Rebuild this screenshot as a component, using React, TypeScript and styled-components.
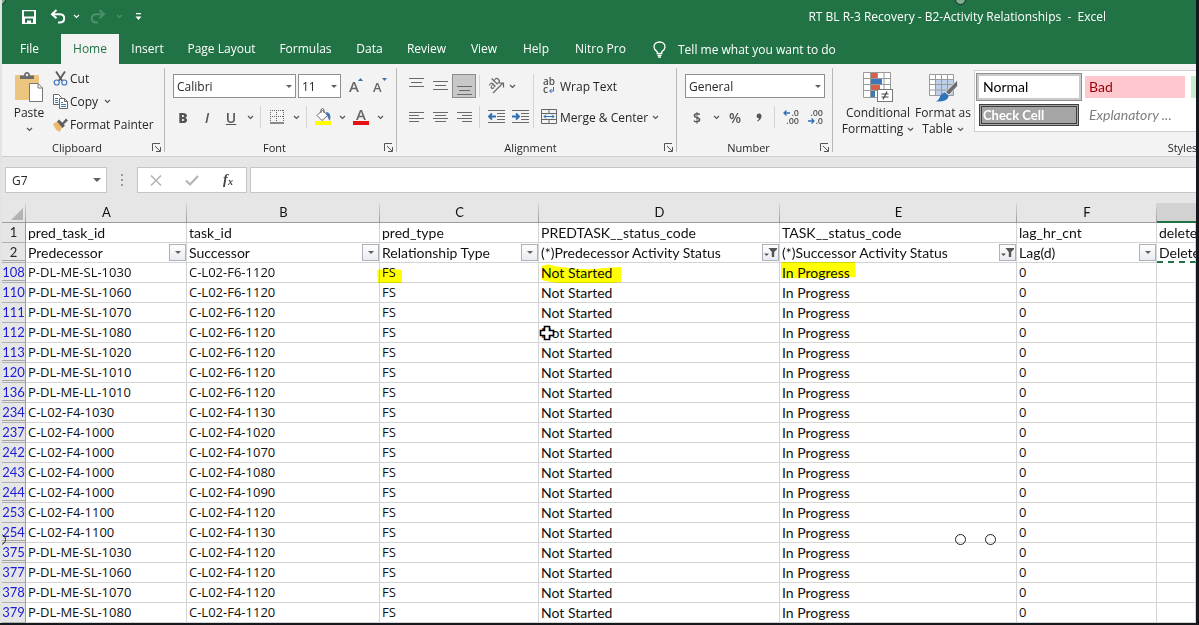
import React from 'react';
import styled, { createGlobalStyle, css } from 'styled-components';

const GREEN = '#217346';
const UI_FONT = '"Open Sans", "Noto Sans", sans-serif';
const SHEET_FONT = 'Lato, "Open Sans", sans-serif';

const GlobalStyle = createGlobalStyle`
  * { box-sizing: border-box; }
  body { margin: 0; background: #15181c; font-family: ${UI_FONT}; font-size: 12px; color: #262626; overflow: hidden; }
  button, input, select { font: inherit; color: inherit; }
  button { background: none; border: 0; padding: 0; white-space: nowrap; }
  svg { flex: none; overflow: visible; }
`;

const Window = styled.main`
  position: relative;
  overflow: hidden;
  margin: 0 3px 2px 0;
  border-left: 2px solid #dfe6e1;
  background: #e6e6e6;
`;

const TitleBar = styled.header`
  display: flex;
  align-items: center;
  justify-content: space-between;
  height: 33px;
  padding: 0 90px 0 16px;
  background: ${GREEN};
  color: #fff;
`;

const QuickAccess = styled.div`
  display: flex;
  align-items: center;
`;

const QuickButton = styled.button<{ $width: number; $faded?: boolean }>`
  display: flex;
  align-items: center;
  justify-content: center;
  width: ${(p) => p.$width}px;
  height: 24px;
  color: ${(p) => (p.$faded ? '#4c9169' : '#fff')};
`;

const Title = styled.h1`
  margin: 0;
  font-size: 12px;
  font-weight: 400;
  white-space: pre;
`;

const Tabs = styled.nav`
  display: flex;
  height: 31px;
  padding-top: 1px;
  background: ${GREEN};
  color: #fff;
`;

const Tab = styled.button<{ $width: number; $active?: boolean }>`
  flex: none;
  width: ${(p) => p.$width}px;
  padding-bottom: 1px;
  text-align: center;
  &:first-child { padding-right: 4px; }
  ${(p) => p.$active && css`background: #f3f3f3; color: ${GREEN};`}
`;

const TellMe = styled.button`
  display: flex;
  align-items: center;
  gap: 12px;
  margin-left: 14px;
`;

const Ribbon = styled.section`
  display: flex;
  height: 93px;
  padding-top: 3px;
  overflow: hidden;
  background: #f3f3f3;
  border-bottom: 1px solid #cfcfcf;
`;

const Group = styled.div<{ $width: number; $pad: number }>`
  flex: none;
  display: flex;
  flex-direction: column;
  justify-content: space-between;
  width: ${(p) => p.$width}px;
  height: 88px;
  padding-left: ${(p) => p.$pad}px;
  background: linear-gradient(#b9b9b9, #b9b9b9) right 1px / 1px 84px no-repeat;
`;

const GroupBody = styled.div`
  display: flex;
`;

const GroupFooter = styled.div<{ $pad: number }>`
  display: grid;
  grid-template-columns: 1fr auto;
  align-items: center;
  height: 16px;
  margin-left: -${(p) => p.$pad}px;
  padding-right: 4px;
  text-align: center;
  font-size: 11px;
`;

const Launcher = styled.button`
  display: flex;
  width: 9px;
  height: 9px;
`;

const ToolRows = styled.div`
  display: flex;
  flex-direction: column;
  gap: 7px;
  padding-top: 7px;
`;

const ToolRow = styled.div<{ $indent?: number }>`
  display: flex;
  align-items: center;
  height: 24px;
  padding-left: ${(p) => p.$indent ?? 0}px;
`;

const IconButton = styled.button<{ $active?: boolean }>`
  flex: none;
  display: flex;
  align-items: center;
  justify-content: center;
  width: 24px;
  height: 24px;
  border: 1px solid transparent;
  font-size: 14px;
  font-weight: 600;
  color: #555;
  ${(p) => p.$active && css`background: #c8c8c8; border-color: #8c8c8c;`}
`;

const CaretButton = styled.button<{ $tight?: boolean }>`
  flex: none;
  display: flex;
  align-items: center;
  justify-content: center;
  width: ${(p) => (p.$tight ? 8 : 14)}px;
  height: 24px;
`;

const Separator = styled.span`
  flex: none;
  width: 1px;
  height: 22px;
  margin: 0 4px 0 3px;
  background: #d4d4d4;
`;

const SelectWrap = styled.span<{ $width: number; $gap?: number }>`
  flex: none;
  display: grid;
  align-items: center;
  width: ${(p) => p.$width}px;
  height: 24px;
  margin-right: ${(p) => p.$gap ?? 0}px;
  & > * { grid-area: 1 / 1; }
  & > svg { justify-self: end; margin-right: 4px; pointer-events: none; }
`;

const Select = styled.select`
  appearance: none;
  width: 100%;
  height: 24px;
  padding: 0 0 0 3px;
  border: 1px solid #8f8f8f;
  border-radius: 0;
  background: #fff;
`;

const BigButton = styled.button<{ $width: number }>`
  flex: none;
  display: flex;
  flex-direction: column;
  align-items: center;
  width: ${(p) => p.$width}px;
  padding-top: 5px;
  line-height: 16px;
  & > svg:first-child { margin-bottom: 3px; }
`;

const BigLine = styled.span`
  display: flex;
  align-items: center;
  gap: 4px;
  min-height: 16px;
`;

const ClipboardList = styled.div`
  display: flex;
  flex-direction: column;
  margin-left: 8px;
`;

const TextButton = styled.button`
  display: flex;
  align-items: center;
  gap: 2px;
  height: 23px;
`;

const AlignIcons = styled.div`
  width: 130px;
  margin-right: 6px;
  background: linear-gradient(#d4d4d4, #d4d4d4) right 7px / 1px 54px no-repeat;
`;

const Gallery = styled.div`
  display: grid;
  grid-template-columns: repeat(5, 100px);
  grid-auto-rows: 22px;
  gap: 6px;
  height: 62px;
  margin: 3px 0 0 2px;
  padding: 5px 4px;
  border: 1px solid #d0d0d0;
  background: #fff;
`;

const StyleCell = styled.button<{ $kind: string }>`
  padding-left: 4px;
  text-align: left;
  font-family: ${SHEET_FONT};
  font-size: 14px;
  line-height: 20px;
  ${(p) => p.$kind === 'normal' && css`color: #000; box-shadow: 0 0 0 2px #cacaca, 0 0 0 3px #8e8e8e;`}
  ${(p) => p.$kind === 'bad' && css`color: #9c0006; background: #ffc7ce;`}
  ${(p) => p.$kind === 'good' && css`color: #006100; background: #c6efce;`}
  ${(p) => p.$kind === 'check' && css`
    padding-left: 1px; color: #fff; font-weight: 700; font-size: 13px; line-height: 16px;
    background: #a5a5a5; border: 3px double #3f3f3f;
  `}
  ${(p) => p.$kind === 'explain' && css`color: #7f7f7f; font-style: italic;`}
`;

const FormulaBar = styled.section`
  display: flex;
  height: 46px;
  padding: 10px 0 10px 3px;
`;

const NameBox = styled.label`
  flex: none;
  display: flex;
  align-items: center;
  width: 102px;
  padding-right: 5px;
  border: 1px solid #c6c6c6;
  background: #fff;
`;

const PlainInput = styled.input`
  flex: 1;
  min-width: 0;
  padding: 0 6px;
  border: 0;
  outline: 0;
  background: transparent;
`;

const Grip = styled.span`
  display: flex;
  align-items: center;
  justify-content: center;
  width: 30px;
`;

const EntryTools = styled.div`
  flex: none;
  display: flex;
  align-items: center;
  width: 110px;
  border: 1px solid #c6c6c6;
  background: #fff;
`;

const EntryButton = styled.button`
  flex: 1;
  display: flex;
  align-items: center;
  justify-content: center;
  height: 24px;
`;

const FormulaInput = styled(PlainInput)`
  margin-left: 3px;
  border: 1px solid #c6c6c6;
  border-right: 0;
  background: #fff;
`;

const Sheet = styled.table`
  width: 100%;
  table-layout: fixed;
  border-collapse: separate;
  border-spacing: 0;
  font-family: ${SHEET_FONT};
  font-size: 14px;
  line-height: 19px;
  color: #111;
`;

const Col = styled.col<{ $width?: number }>`
  width: ${(p) => (p.$width ? `${p.$width}px` : 'auto')};
`;

const ColumnHead = styled.th<{ $selected?: boolean }>`
  height: 20px;
  padding: 0;
  font-size: 13px;
  font-weight: 400;
  border-bottom: 1px solid #9c9c9c;
  background: linear-gradient(#d8d8d8, #9c9c9c) right / 1px 100% no-repeat #e6e6e6;
  ${(p) => p.$selected && css`background: #d2d2d2; border-bottom: 2px solid ${GREEN};`}
`;

const SelectAll = styled.svg`
  display: block;
  margin: 2px 3px 0 auto;
`;

const RowHead = styled.th<{ $filtered: boolean; $gapBelow: boolean }>`
  height: 20px;
  padding: 0;
  font-size: 13px;
  font-weight: 400;
  color: ${(p) => (p.$filtered ? '#1c1cd8' : '#262626')};
  background: ${(p) => (p.$gapBelow ? 'linear-gradient(#a8a8a8, #a8a8a8) 0 17px / 100% 1px no-repeat #e6e6e6' : '#e6e6e6')};
  border-right: 1px solid #9c9c9c;
  border-bottom: 1px solid #b0b0b0;
`;

const Cell = styled.td<{ $marching?: boolean; $code?: boolean }>`
  position: relative;
  height: 20px;
  padding: 0 0 0 2px;
  white-space: nowrap;
  background: #fff;
  border-right: 1px solid #d4d4d4;
  border-bottom: 1px solid #d4d4d4;
  ${(p) => p.$code && css`font-family: ${UI_FONT}; font-size: 13px;`}
  ${(p) => p.$marching && css`border-bottom: 2px dashed ${GREEN};`}
`;

const HeaderCell = styled.div`
  display: flex;
  align-items: center;
  justify-content: space-between;
  height: 18px;
`;

const FilterButton = styled.button`
  flex: none;
  display: flex;
  align-items: center;
  justify-content: center;
  width: 17px;
  height: 17px;
  border: 1px solid #adb2ba;
  background: linear-gradient(#fff, #e8ebf0);
`;

const Marker = styled.svg<{ $x: number; $y: number }>`
  position: absolute;
  left: ${(p) => p.$x}px;
  top: ${(p) => p.$y}px;
  mix-blend-mode: multiply;
  pointer-events: none;
`;

const Pointer = styled.svg`
  position: absolute;
  left: 0;
  top: 2px;
  pointer-events: none;
`;

const Handle = styled.span<{ $x: number; $y: number; $light?: boolean }>`
  position: absolute;
  left: ${(p) => p.$x}px;
  top: ${(p) => p.$y}px;
  width: 11px;
  height: 11px;
  border: 1px solid #222;
  border-radius: 50%;
  ${(p) => p.$light && css`background: #7fae93;`}
`;

/* ---------- icons ---------- */

const Chevron = ({ color = '#555' }: { color?: string }) => (
  <svg width="7" height="5" viewBox="0 0 7 5" fill="none" stroke={color} strokeWidth="1.2">
    <path d="M1 1l2.5 2.4L6 1" />
  </svg>
);

const Triangle = ({ size = 6 }: { size?: number }) => (
  <svg width={size} height={size / 2} viewBox="0 0 8 4">
    <path d="M0 0h8L4 4z" fill="#606060" />
  </svg>
);

const SaveIcon = () => (
  <svg width="14" height="14" viewBox="0 0 14 14">
    <path fill="#fff" fillRule="evenodd" d="M0 0h14v14H0zM2 1.300v5.200h10V1.300zM3 8.500v4.200h2V10.500h4v2.200h2V8.500z" />
    <path fill="#fff" d="M6 11.200h1.600v2H6z" />
  </svg>
);

const UndoIcon = ({ flip }: { flip?: boolean }) => (
  <svg width="16" height="15" viewBox="0 0 16 15" fill="none" stroke="currentColor" strokeWidth="2">
    <g transform={flip ? 'translate(16 0) scale(-1 1)' : undefined}>
      <path d="M6.500 1L2 5.200l4.500 4" />
      <path d="M2 5.200h7.500c3 0 4.700 1.600 4.700 4s-1.700 4.300-4.700 4.300H8" />
    </g>
  </svg>
);

const CustomizeIcon = () => (
  <svg width="7" height="8" viewBox="0 0 7 8" fill="#fff">
    <path d="M1 0h5v1.200H1zM0.500 3.500h6l-3 3.500z" />
  </svg>
);

const BulbIcon = () => (
  <svg width="13" height="17" viewBox="0 0 13 17" fill="none" stroke="#fff" strokeWidth="1.300">
    <path d="M4.200 12.500V10.800C2.600 9.600 1 8.200 1 5.900 1 3 3.400 1 6.500 1S12 3 12 5.900c0 2.300-1.600 3.700-3.200 4.900v1.700z" />
    <path d="M4.500 14.300h4M5 16h3" />
  </svg>
);

const PasteIcon = () => (
  <svg width="30" height="30" viewBox="0 0 30 30">
    <rect x="1" y="3" width="24" height="25" rx="1" fill="#ecc57f" />
    <path d="M6 7V3.500h4C10 1 11.500 0 13 0s3 1 3 3.500h4V7z" fill="#6d6d6d" />
    <circle cx="13" cy="3" r="1.200" fill="#f3f3f3" />
    <path d="M15.500 11.500H24l4.500 4.500v13.500h-13z" fill="#fff" stroke="#777" />
    <path d="M24 11.500V16h4.500" fill="none" stroke="#777" />
  </svg>
);

const CutIcon = () => (
  <svg width="15" height="15" viewBox="0 0 15 15" fill="none">
    <path d="M3 0.500l6.200 9.300M12 0.500L5.800 9.800" stroke="#5a5a5a" strokeWidth="1.800" />
    <circle cx="3.700" cy="11.500" r="2.500" stroke="#3f78b8" strokeWidth="1.200" />
    <circle cx="11.300" cy="11.500" r="2.500" stroke="#3f78b8" strokeWidth="1.200" />
  </svg>
);

const CopyIcon = () => (
  <svg width="15" height="15" viewBox="0 0 15 15" stroke="#666" fill="#fff">
    <path d="M0.500 0.500h5l3 3v7h-8z" />
    <path d="M2 4.500h3M2 6.500h3M2 8.500h3" stroke="#3f78b8" />
    <path d="M6.500 4.500h5l3 3v7h-8z" />
    <path d="M11.500 4.500v3h3" fill="none" />
    <path d="M8 8.500h2M8 10.500h5M8 12.500h5" stroke="#3f78b8" />
  </svg>
);

const PainterIcon = () => (
  <svg width="15" height="14" viewBox="0 0 15 14">
    <path d="M0 6l4-2.500 5.500 5.500L6.500 14 3 11.500z" fill="#ecb96a" />
    <path d="M4 3.500l2-2 3.300 3.200L13 0.500 15 2.500l-4.200 3.800 1.200 1.200-2.500 2.500z" fill="#5f5f5f" />
  </svg>
);

const LauncherIcon = () => (
  <svg width="9" height="9" viewBox="0 0 9 9" fill="none" stroke="#555">
    <path d="M0.500 8V0.500H8M3 3l5 5M8.500 4v4.500H4" />
  </svg>
);

const FontSizeIcon = ({ grow }: { grow?: boolean }) => (
  <svg width="15" height="18" viewBox="0 0 15 18">
    <text x="0" y="15" fontFamily="Open Sans" fontWeight="600" fontSize={grow ? 15 : 13} fill="#666">A</text>
    <path d={grow ? 'M9 4h5l-2.500-3z' : 'M9 1h5l-2.500 3z'} fill="#3f6fae" />
  </svg>
);

const BordersIcon = () => (
  <svg width="14" height="14" viewBox="0 0 14 14" fill="none" stroke="#666">
    <path d="M0 0.500h14M0 6.500h14M0.500 0v12M6.500 0v12M13.500 0v12" strokeDasharray="1 1" />
    <path d="M0 13h14" strokeWidth="1.500" />
  </svg>
);

const FillIcon = () => (
  <svg width="18" height="18" viewBox="0 0 18 18">
    <path d="M3 7.500L8.500 2l5 5.500-5.500 5z" fill="#fff" stroke="#666" />
    <path d="M7 5V1.500q1.500-2 3 0V5" fill="none" stroke="#666" />
    <path d="M12 4c4 .3 5.200 3.500 4 8.500-2-1-1.500-3-3-5z" fill="#3f78b8" />
    <rect x="1" y="13" width="16" height="4" fill="#ffff00" />
  </svg>
);

const FontColorIcon = () => (
  <svg width="16" height="18" viewBox="0 0 16 18">
    <text x="8" y="12" textAnchor="middle" fontFamily="Open Sans" fontWeight="600" fontSize="15" fill="#666">A</text>
    <rect y="13" width="16" height="4" fill="#e81010" />
  </svg>
);

const Lines = ({ rows, height = 14 }: { rows: [number, number, number][]; height?: number }) => (
  <svg width="15" height={height} viewBox={`0 0 15 ${height}`} stroke="#6a6a6a">
    {rows.map(([x, y, w]) => <path key={y} d={`M${x} ${y}.5h${w}`} />)}
  </svg>
);

const OrientationIcon = () => (
  <svg width="17" height="16" viewBox="0 0 17 16">
    <text transform="translate(4 12) rotate(-45)" fontFamily="Open Sans" fontWeight="600" fontSize="11" fill="#666">ab</text>
    <path d="M5 15L15 5M11 5h4.500v4.500" fill="none" stroke="#666" strokeWidth="1.200" />
  </svg>
);

const IndentIcon = ({ right }: { right?: boolean }) => (
  <svg width="17" height="14" viewBox="0 0 17 14" fill="none">
    <path d="M0 0.500h17M9 3.500h8M9 6.500h8M9 9.500h8M0 12.500h17" stroke="#6a6a6a" />
    <path d={right ? 'M0 6.500h6M4 3.500l3 3-3 3' : 'M1 6.500h7M4 3.500l-3 3 3 3'} stroke="#2f6db3" strokeWidth="1.800" />
  </svg>
);

const WrapIcon = () => (
  <svg width="18" height="18" viewBox="0 0 18 18">
    <text x="3" y="8" fontFamily="Open Sans" fontWeight="600" fontSize="10" fill="#555">ab</text>
    <text x="3" y="16" fontFamily="Open Sans" fontWeight="600" fontSize="10" fill="#555">c</text>
    <path d="M13.500 10v4H10M11.500 12l-2 2 2 2" fill="none" stroke="#2f6db3" />
  </svg>
);

const MergeIcon = () => (
  <svg width="18" height="16" viewBox="0 0 18 16" fill="none">
    <path d="M1.500 0.500h15v14h-15zM1.500 4.500h15M1.500 10.500h15M9 0.500v4M9 10.500v4" stroke="#666" />
    <path d="M4 7.500h10M6 5.500l-2 2 2 2M12 5.500l2 2-2 2" stroke="#2f6db3" />
  </svg>
);

const CommaIcon = () => (
  <svg width="6" height="9" viewBox="0 0 6 9" fill="#555">
    <path d="M3 0.500c1.600 0 2.500 1 2.500 2.600C5.500 5.600 4 7.500 1.400 8.500L1 7.600C2.300 7 3 6.200 3.100 5.200 1.600 5.200 0.600 4.300 0.600 2.900 0.600 1.500 1.600 0.500 3 0.500z" />
  </svg>
);

const DecimalIcon = ({ more }: { more?: boolean }) => (
  <svg width="16" height="16" viewBox="0 0 16 16">
    <text x="16" y="7" textAnchor="end" fontFamily="Open Sans" fontSize="9" fontWeight="600" fill="#555">{more ? '.0' : '.00'}</text>
    <text x="16" y="15" textAnchor="end" fontFamily="Open Sans" fontSize="9" fontWeight="600" fill="#555">{more ? '.00' : '.0'}</text>
    <path d={more ? 'M7 4H1M3.500 1.500L1 4l2.500 2.500' : 'M1 12h6M4.500 9.500L7 12l-2.500 2.500'} fill="none" stroke="#2f6db3" strokeWidth="1.300" />
  </svg>
);

const ConditionalIcon = () => (
  <svg width="30" height="30" viewBox="0 0 30 30">
    <rect x="0.500" y="0.500" width="27" height="25" fill="#fff" />
    <path d="M0.500 0.500h27v25h-27zM0.500 6.500h27M0.500 12.500h27M0.500 18.500h27M7.500 0.500v25M14.500 0.500v25M21 0.500v25" fill="none" stroke="#9a9a9a" />
    <rect x="8" y="1" width="6" height="5" fill="#d8604a" />
    <rect x="8" y="7" width="11" height="5" fill="#3f78b8" />
    <rect x="8" y="13" width="9" height="5" fill="#d8604a" />
    <rect x="8" y="19" width="4" height="6" fill="#3f78b8" />
    <rect x="14.500" y="17.500" width="15" height="12" fill="#fff" stroke="#777" />
    <path d="M18.500 22h7M18.500 25h7M24 19.500l-4 8" stroke="#444" strokeWidth="1.200" />
  </svg>
);

const TableIcon = () => (
  <svg width="30" height="30" viewBox="0 0 30 30">
    <rect x="1.500" y="2.500" width="24" height="21" fill="#fff" />
    <rect x="7.500" y="8" width="18" height="15" fill="#bcd0ea" />
    <path d="M1.500 2.500h24v21h-24zM1.500 7.500h24M1.500 12.500h24M1.500 18h24M7.500 2.500v21M13.500 2.500v21M19.500 2.500v21" fill="none" stroke="#9a9a9a" />
    <path d="M29.500 8v6l-8.500 9-3.500-3z" fill="#6b6b6b" stroke="#f3f3f3" strokeWidth="0.800" />
    <path d="M17 20.500l3.500 3.200c0 3.500-3 5.800-12.500 5.800 3-1.500 3-3 4-5 1.200-2.300 2.800-3.600 5-4z" fill="#2f74ba" />
  </svg>
);

const FunnelIcon = () => (
  <svg width="13" height="11" viewBox="0 0 13 11" fill="#555">
    <path d="M4.500 1H13v1.200L10.200 5v5H7.800V5zM0 6.500h5L2.500 9z" />
  </svg>
);

/* ---------- data ---------- */

const TABS: [string, number][] = [
  ['File', 59], ['Home', 58], ['Insert', 57], ['Page Layout', 91], ['Formulas', 77],
  ['Data', 51], ['Review', 63], ['View', 52], ['Help', 52], ['Nitro Pro', 77],
];

const COLUMNS: [string, number | undefined][] = [
  ['A', 161], ['B', 193], ['C', 159], ['D', 241], ['E', 237], ['F', 140], ['', undefined],
];

const FIELD_NAMES = ['pred_task_id', 'task_id', 'pred_type', 'PREDTASK__status_code', 'TASK__status_code', 'lag_hr_cnt', 'delete'];

const FIELD_LABELS: [string, 'list' | 'funnel' | null][] = [
  ['Predecessor', 'list'], ['Successor', 'list'], ['Relationship Type', 'list'],
  ['(*)Predecessor Activity Status', 'funnel'], ['(*)Successor Activity Status', 'funnel'],
  ['Lag(d)', 'list'], ['Delete', null],
];

const ROWS: [number, string, string][] = [
  [108, 'P-DL-ME-SL-1030', 'C-L02-F6-1120'],
  [110, 'P-DL-ME-SL-1060', 'C-L02-F6-1120'],
  [111, 'P-DL-ME-SL-1070', 'C-L02-F6-1120'],
  [112, 'P-DL-ME-SL-1080', 'C-L02-F6-1120'],
  [113, 'P-DL-ME-SL-1020', 'C-L02-F6-1120'],
  [120, 'P-DL-ME-SL-1010', 'C-L02-F6-1120'],
  [136, 'P-DL-ME-LL-1010', 'C-L02-F6-1120'],
  [234, 'C-L02-F4-1030', 'C-L02-F4-1130'],
  [237, 'C-L02-F4-1000', 'C-L02-F4-1020'],
  [242, 'C-L02-F4-1000', 'C-L02-F4-1070'],
  [243, 'C-L02-F4-1000', 'C-L02-F4-1080'],
  [244, 'C-L02-F4-1000', 'C-L02-F4-1090'],
  [253, 'C-L02-F4-1100', 'C-L02-F4-1120'],
  [254, 'C-L02-F4-1100', 'C-L02-F4-1130'],
  [375, 'P-DL-ME-SL-1030', 'C-L02-F4-1120'],
  [377, 'P-DL-ME-SL-1060', 'C-L02-F4-1120'],
  [378, 'P-DL-ME-SL-1070', 'C-L02-F4-1120'],
  [379, 'P-DL-ME-SL-1080', 'C-L02-F4-1120'],
];

const hasGapBelow = (i: number) => i + 1 < ROWS.length && ROWS[i + 1][0] - ROWS[i][0] > 1;

const Combo = ({ label, value, width, gap }: { label: string; value: string; width: number; gap?: number }) => (
  <SelectWrap $width={width} $gap={gap}>
    <Select aria-label={label} defaultValue={value}><option>{value}</option></Select>
    <Triangle />
  </SelectWrap>
);

const Footer = ({ label, pad }: { label: string; pad: number }) => (
  <GroupFooter $pad={pad}>
    <span>{label}</span>
    <Launcher aria-label={`${label} settings`}><LauncherIcon /></Launcher>
  </GroupFooter>
);

const Caret = ({ label, tight }: { label: string; tight?: boolean }) => (
  <CaretButton aria-label={label} $tight={tight}><Chevron /></CaretButton>
);

export default function App() {
  return (
    <>
      <GlobalStyle />
      <Window>
        <TitleBar>
          <QuickAccess>
            <QuickButton $width={22} aria-label="Save"><SaveIcon /></QuickButton>
            <QuickButton $width={36} aria-label="Undo"><UndoIcon /></QuickButton>
            <QuickButton $width={1} aria-label="Undo list"><Chevron color="#fff" /></QuickButton>
            <QuickButton $width={42} $faded aria-label="Redo"><UndoIcon flip /></QuickButton>
            <QuickButton $width={1} aria-label="Redo list"><Chevron color="#4c9169" /></QuickButton>
            <QuickButton $width={36} aria-label="Customize toolbar"><CustomizeIcon /></QuickButton>
          </QuickAccess>
          <Title>RT BL R-3 Recovery - B2-Activity Relationships  -  Excel</Title>
        </TitleBar>

        <Tabs>
          {TABS.map(([name, width]) => (
            <Tab key={name} $width={width} $active={name === 'Home'}>{name}</Tab>
          ))}
          <TellMe><BulbIcon />Tell me what you want to do</TellMe>
        </Tabs>

        <Ribbon>
          <Group $width={163} $pad={11}>
            <GroupBody>
              <BigButton $width={32}>
                <PasteIcon />
                <BigLine>Paste</BigLine>
                <BigLine><Chevron /></BigLine>
              </BigButton>
              <ClipboardList>
                <TextButton><CutIcon />Cut</TextButton>
                <TextButton><CopyIcon />Copy<Caret label="Copy options" /></TextButton>
                <TextButton><PainterIcon />Format Painter</TextButton>
              </ClipboardList>
            </GroupBody>
            <Footer label="Clipboard" pad={11} />
          </Group>

          <Group $width={232} $pad={6}>
            <ToolRows>
              <ToolRow $indent={2}>
                <Combo label="Font" value="Calibri" width={123} gap={2} />
                <Combo label="Font size" value="11" width={43} gap={3} />
                <IconButton aria-label="Increase font size"><FontSizeIcon grow /></IconButton>
                <IconButton aria-label="Decrease font size"><FontSizeIcon /></IconButton>
              </ToolRow>
              <ToolRow>
                <IconButton><b>B</b></IconButton>
                <IconButton><i>I</i></IconButton>
                <IconButton><u>U</u></IconButton>
                <Caret label="Underline style" />
                <Separator />
                <IconButton aria-label="Borders"><BordersIcon /></IconButton>
                <Caret label="Border style" />
                <Separator />
                <IconButton aria-label="Fill color"><FillIcon /></IconButton>
                <Caret label="Fill colors" />
                <IconButton aria-label="Font color"><FontColorIcon /></IconButton>
                <Caret label="Font colors" />
              </ToolRow>
            </ToolRows>
            <Footer label="Font" pad={6} />
          </Group>

          <Group $width={280} $pad={7}>
            <GroupBody>
              <AlignIcons>
                <ToolRows>
                  <ToolRow>
                    <IconButton aria-label="Top align"><Lines rows={[[0, 2, 15], [2, 6, 11], [0, 10, 15]]} height={20} /></IconButton>
                    <IconButton aria-label="Middle align"><Lines rows={[[0, 3, 15], [2, 7, 11], [0, 11, 15]]} height={16} /></IconButton>
                    <IconButton $active aria-label="Bottom align"><Lines rows={[[0, 8, 15], [2, 12, 11], [0, 16, 15]]} height={16} /></IconButton>
                    <Separator />
                    <IconButton aria-label="Orientation"><OrientationIcon /></IconButton>
                    <Caret label="Orientation options" tight />
                  </ToolRow>
                  <ToolRow>
                    <IconButton aria-label="Align left"><Lines rows={[[0, 2, 15], [0, 5, 10], [0, 8, 15], [0, 11, 10]]} /></IconButton>
                    <IconButton aria-label="Center"><Lines rows={[[0, 2, 15], [2, 5, 11], [0, 8, 15], [2, 11, 11]]} /></IconButton>
                    <IconButton aria-label="Align right"><Lines rows={[[0, 2, 15], [5, 5, 10], [0, 8, 15], [5, 11, 10]]} /></IconButton>
                    <Separator />
                    <IconButton aria-label="Decrease indent"><IndentIcon /></IconButton>
                    <IconButton aria-label="Increase indent"><IndentIcon right /></IconButton>
                  </ToolRow>
                </ToolRows>
              </AlignIcons>
              <ToolRows>
                <ToolRow><TextButton><WrapIcon />Wrap Text</TextButton></ToolRow>
                <ToolRow><TextButton><MergeIcon />Merge &amp; Center</TextButton><Caret label="Merge options" /></ToolRow>
              </ToolRows>
            </GroupBody>
            <Footer label="Alignment" pad={7} />
          </Group>

          <Group $width={156} $pad={8}>
            <ToolRows>
              <ToolRow><Combo label="Number format" value="General" width={140} /></ToolRow>
              <ToolRow>
                <IconButton>$</IconButton>
                <Caret label="Currency options" />
                <IconButton>%</IconButton>
                <IconButton aria-label="Comma style"><CommaIcon /></IconButton>
                <Separator />
                <IconButton aria-label="Increase decimal"><DecimalIcon more /></IconButton>
                <IconButton aria-label="Decrease decimal"><DecimalIcon /></IconButton>
              </ToolRow>
            </ToolRows>
            <Footer label="Number" pad={8} />
          </Group>

          <Group $width={712} $pad={9}>
            <GroupBody>
              <BigButton $width={72}>
                <ConditionalIcon />
                <BigLine>Conditional</BigLine>
                <BigLine>Formatting<Chevron /></BigLine>
              </BigButton>
              <BigButton $width={58}>
                <TableIcon />
                <BigLine>Format as</BigLine>
                <BigLine>Table<Chevron /></BigLine>
              </BigButton>
              <Gallery>
                <StyleCell $kind="normal">Normal</StyleCell>
                <StyleCell $kind="bad">Bad</StyleCell>
                <StyleCell $kind="good" aria-label="Good" />
                <span />
                <span />
                <StyleCell $kind="check">Check Cell</StyleCell>
                <StyleCell $kind="explain">Explanatory ...</StyleCell>
              </Gallery>
            </GroupBody>
            <Footer label="Styles" pad={9} />
          </Group>
        </Ribbon>

        <FormulaBar>
          <NameBox>
            <PlainInput aria-label="Name box" defaultValue="G7" />
            <Triangle size={8} />
          </NameBox>
          <Grip>
            <svg width="2" height="12" viewBox="0 0 2 12" fill="#999"><path d="M0 0h2v2H0zM0 5h2v2H0zM0 10h2v2H0z" /></svg>
          </Grip>
          <EntryTools>
            <EntryButton aria-label="Cancel">
              <svg width="12" height="11" viewBox="0 0 12 11" stroke="#b5b5b5" strokeWidth="1.600"><path d="M1 0.500l10 10M11 0.500l-10 10" /></svg>
            </EntryButton>
            <EntryButton aria-label="Enter">
              <svg width="14" height="11" viewBox="0 0 14 11" fill="none" stroke="#b5b5b5" strokeWidth="2.200"><path d="M1 5.500l4 4L13 1" /></svg>
            </EntryButton>
            <EntryButton aria-label="Insert function">
              <svg width="16" height="16" viewBox="0 0 16 16" fill="#444" fontFamily="Liberation Serif" fontStyle="italic" fontWeight="700">
                <text x="3" y="12" fontSize="14">f</text>
                <text x="8" y="13" fontSize="10">x</text>
              </svg>
            </EntryButton>
          </EntryTools>
          <FormulaInput aria-label="Formula" />
        </FormulaBar>

        <Sheet>
          <colgroup>
            <Col $width={24} />
            {COLUMNS.map(([name, width]) => <Col key={name} $width={width} />)}
          </colgroup>
          <thead>
            <tr>
              <ColumnHead aria-label="Select all">
                <SelectAll width="12" height="12" viewBox="0 0 12 12"><path d="M12 0v12H0z" fill="#b3b3b3" /></SelectAll>
              </ColumnHead>
              {COLUMNS.map(([name]) => <ColumnHead key={name} $selected={!name}>{name}</ColumnHead>)}
            </tr>
          </thead>
          <tbody>
            <tr>
              <RowHead $filtered={false} $gapBelow={false}>1</RowHead>
              {FIELD_NAMES.map((name) => <Cell key={name}>{name}</Cell>)}
            </tr>
            <tr>
              <RowHead $filtered={false} $gapBelow>2</RowHead>
              {FIELD_LABELS.map(([label, filter]) => (
                <Cell key={label} $marching={!filter}>
                  <HeaderCell>
                    {label}
                    {filter && (
                      <FilterButton aria-label={`Filter ${label}`}>
                        {filter === 'funnel' ? <FunnelIcon /> : <Triangle />}
                      </FilterButton>
                    )}
                  </HeaderCell>
                </Cell>
              ))}
            </tr>
            {ROWS.map(([number, pred, succ], i) => (
              <tr key={number}>
                <RowHead $filtered $gapBelow={hasGapBelow(i)}>{number}</RowHead>
                <Cell $code>{pred}</Cell>
                <Cell $code>{succ}</Cell>
                <Cell $code>
                  FS
                  {i === 0 && (
                    <Marker $x={-3} $y={6} width="26" height="17" viewBox="0 0 26 17">
                      <path d="M0 1q12-2 25 0l0 14q-12 2-24 1z" fill="#ffff00" />
                    </Marker>
                  )}
                </Cell>
                <Cell>
                  Not Started
                  {i === 0 && (
                    <Marker $x={3} $y={2} width="80" height="21" viewBox="0 0 80 21">
                      <path d="M0 1q6-3 12 0 30 5 50 2l17-1 0 15q-20 3-45 2-20 0-34-4z" fill="#ffff00" />
                    </Marker>
                  )}
                  {number === 112 && (
                    <Pointer width="16" height="16" viewBox="0 0 16 16">
                      <path d="M5.500 1.500h5v4h4v5h-4v4h-5v-4h-4v-5h4z" fill="#fff" stroke="#000" strokeWidth="1.600" />
                    </Pointer>
                  )}
                </Cell>
                <Cell>
                  In Progress
                  {i === 0 && (
                    <Marker $x={1} $y={-1} width="76" height="17" viewBox="0 0 76 17">
                      <path d="M0 0h74l1 15q-38 2-75 1z" fill="#ffff00" />
                    </Marker>
                  )}
                </Cell>
                <Cell $code>0</Cell>
                <Cell />
              </tr>
            ))}
          </tbody>
        </Sheet>

        <Handle $x={-7} $y={-6} $light />
        <Handle $x={953} $y={-6} $light />
        <Handle $x={-7} $y={534} />
        <Handle $x={953} $y={534} />
        <Handle $x={983} $y={534} />
      </Window>
    </>
  );
}
